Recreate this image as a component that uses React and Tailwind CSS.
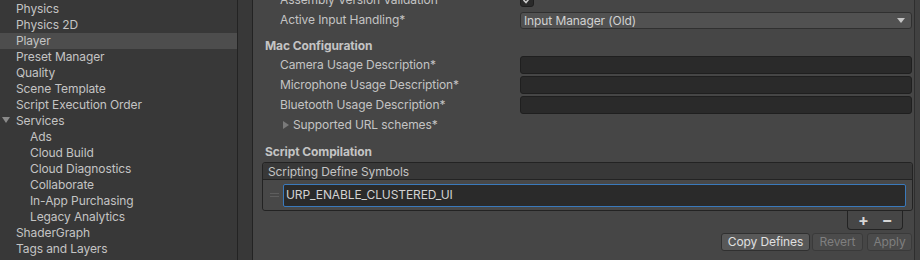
import React from "react";

const leftItems = [
  { t: "Physics" },
  { t: "Physics 2D" },
  { t: "Player", sel: true },
  { t: "Preset Manager" },
  { t: "Quality" },
  { t: "Scene Template" },
  { t: "Script Execution Order" },
  { t: "Services", open: true },
  { t: "Ads", child: true },
  { t: "Cloud Build", child: true },
  { t: "Cloud Diagnostics", child: true },
  { t: "Collaborate", child: true },
  { t: "In-App Purchasing", child: true },
  { t: "Legacy Analytics", child: true },
  { t: "ShaderGraph" },
  { t: "Tags and Layers" },
];

function LeftRow({ item }) {
  return (
    <div
      className={
        "relative h-4 flex items-center leading-4 whitespace-nowrap " +
        (item.sel ? "bg-[#4d4d4d] " : "") +
        (item.child ? "pl-[30px]" : "pl-4")
      }
    >
      {item.open && (
        <svg className="absolute left-[2px] top-[4px]" width="8" height="6" viewBox="0 0 8 6">
          <path d="M0 0 L8 0 L4 6 Z" fill="#8a8a8a" />
        </svg>
      )}
      {item.t}
    </div>
  );
}

function Label({ children }) {
  return <div className="w-[258px] shrink-0 pl-[18px] whitespace-nowrap">{children}</div>;
}

function TextField() {
  return <div className="flex-1 h-[18px] rounded-[3px] bg-[#2a2a2a] border border-[#1f1f1f]" />;
}

export default function App() {
  return (
    <div className="w-[920px] h-[260px] overflow-hidden flex bg-[#383838] text-[12px] tracking-[-0.1px] text-[#c4c4c4] font-['Inter','Liberation_Sans',sans-serif]">
      {/* left list */}
      <div className="w-[238px] shrink-0 border-r border-[#232323] pt-[1px] flex flex-col">
        {leftItems.map((it) => (
          <LeftRow key={it.t} item={it} />
        ))}
      </div>
      {/* splitter strip */}
      <div className="w-[15px] shrink-0 bg-[#383838] border-r border-[#232323]" />
      {/* main */}
      <div className="flex-1 bg-[#464646] flex">
        <div className="flex-1 flex flex-col pl-[9px] pr-[2px] leading-[18px]">
          {/* Assembly Version Validation */}
          <div className="mt-[-9px] h-[18px] flex items-center shrink-0">
            <Label>Assembly Version Validation</Label>
            <div className="w-[14px] h-[14px] rounded-[3px] bg-[#2a2a2a] border border-[#1f1f1f] flex items-center justify-center">
              <svg width="10" height="10" viewBox="0 0 10 10">
                <path d="M1.5 5 L4 7.5 L8.5 2" stroke="#c8c8c8" strokeWidth="1.6" fill="none" />
              </svg>
            </div>
          </div>
          {/* Active Input Handling */}
          <div className="mt-[2px] h-[18px] flex items-center shrink-0">
            <Label>Active Input Handling*</Label>
            <div className="flex-1 mt-[1px] h-[17px] rounded-[3px] bg-[#515151] border border-[#303030] flex items-center pl-[3px] pr-[6px] text-[#d2d2d2]">
              <span className="flex-1">Input Manager (Old)</span>
              <svg width="8" height="5" viewBox="0 0 8 5">
                <path d="M0 0 L8 0 L4 5 Z" fill="#c4c4c4" />
              </svg>
            </div>
          </div>
          {/* Mac Configuration */}
          <div className="mt-[8px] h-[18px] pl-[3px] font-bold shrink-0">Mac Configuration</div>
          <div className="mt-[1px] h-[18px] flex items-center shrink-0">
            <Label>Camera Usage Description*</Label>
            <TextField />
          </div>
          <div className="mt-[2px] h-[18px] flex items-center shrink-0">
            <Label>Microphone Usage Description*</Label>
            <TextField />
          </div>
          <div className="mt-[2px] h-[18px] flex items-center shrink-0">
            <Label>Bluetooth Usage Description*</Label>
            <TextField />
          </div>
          <div className="mt-[2px] h-[18px] flex items-center shrink-0 pl-[20px] gap-[3px]">
            <svg width="8" height="8" viewBox="0 0 8 8">
              <path d="M1 0 L7 4 L1 8 Z" fill="#7a7a7a" />
            </svg>
            <span>Supported URL schemes*</span>
          </div>
          {/* Script Compilation */}
          <div className="mt-[9px] h-[18px] pl-[3px] font-bold shrink-0">Script Compilation</div>
          <div className="mt-[1px] border border-[#232323] rounded-[3px] flex flex-col shrink-0 mr-[-1px]">
            <div className="h-[17px] bg-[#383838] border-b border-[#232323] pl-[5px] leading-[17px] rounded-t-[3px]">
              Scripting Define Symbols
            </div>
            <div className="h-[30px] bg-[#484848] flex items-center rounded-b-[3px]">
              <div className="w-[20px] flex flex-col items-center gap-[2px] pl-[2px]">
                <div className="w-[9px] h-[1px] bg-[#5e5e5e]" />
                <div className="w-[9px] h-[1px] bg-[#5e5e5e]" />
              </div>
              <div className="flex-1 h-[23px] rounded-[2px] bg-[#2a2a2a] border border-[#3a79bb] flex items-center pl-[2px] text-[#d2d2d2]">
                URP_ENABLE_CLUSTERED_UI
              </div>
              <div className="w-[6px]" />
            </div>
          </div>
          <div className="flex justify-end pr-[9px] shrink-0">
            <div className="w-[56px] h-[20px] mt-[-1px] border border-t-0 border-[#232323] rounded-b-[4px] flex items-center pl-[10px] gap-[13px] text-[#d6d6d6] font-bold text-[16px] leading-[18px]">
              <span>+</span>
              <span>−</span>
            </div>
          </div>
          <div className="mt-[3px] flex justify-end gap-[2px] shrink-0">
            <div className="h-[18px] w-[89px] rounded-[3px] bg-[#585858] border border-[#303030] flex items-center justify-center text-[#e0e0e0]">
              Copy Defines
            </div>
            <div className="h-[18px] w-[51px] rounded-[3px] bg-[#4b4b4b] border border-[#3a3a3a] flex items-center justify-center text-[#7f7f7f]">
              Revert
            </div>
            <div className="ml-[2px] h-[18px] w-[45px] rounded-[3px] bg-[#4b4b4b] border border-[#3a3a3a] flex items-center justify-center text-[#7f7f7f]">
              Apply
            </div>
          </div>
        </div>
        <div className="w-[6px] shrink-0 border-l border-[#2e2e2e] bg-[#414141]" />
      </div>
    </div>
  );
}
